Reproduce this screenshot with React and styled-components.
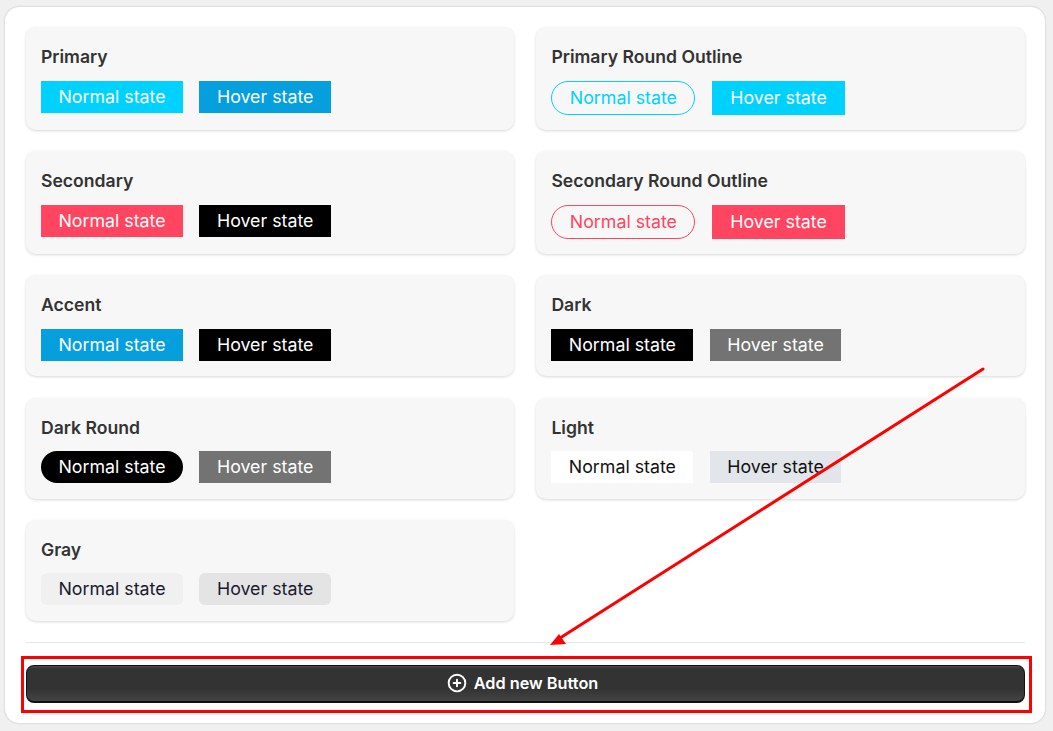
import React from 'react';
import styled, { createGlobalStyle } from 'styled-components';
import { CirclePlus } from 'lucide-react';

const GlobalStyle = createGlobalStyle`
  html, body {
    margin: 0;
    background: #f0f0f0;
    font-family: Inter, "Liberation Sans", sans-serif;
  }
`;

const Page = styled.div`
  position: relative;
  height: 731px;
  box-sizing: border-box;
  padding: 7px 8px 8px 5px;
  overflow: hidden;
`;

const Panel = styled.div`
  height: 100%;
  box-sizing: border-box;
  padding: 20.25px 20px 20px 21px;
  background: #fff;
  border-radius: 14px;
  box-shadow: 0 0 2px rgba(0, 0, 0, 0.25);
`;

const Grid = styled.div`
  display: grid;
  grid-template-columns: 488px 1fr;
  column-gap: 22.4px;
  row-gap: 21.1px;
`;

const Card = styled.div`
  padding: 18px 15px 15.3px;
  background: #f7f7f7;
  border-radius: 10px;
  box-shadow: 0 1px 3px rgba(0, 0, 0, 0.16);
`;

const CardTitle = styled.h3`
  margin: 0 0 12px;
  font-size: 17.6px;
  line-height: 23.7px;
  font-weight: 600;
  color: #333;
`;

const Row = styled.div`
  display: flex;
  align-items: flex-start;
  gap: 16.4px;
`;

const Sample = styled.span`
  display: block;
  box-sizing: border-box;
  width: ${(p) => (p.$tall ? '133.6px' : p.$wide ? '142px' : '131.6px')};
  height: ${(p) => (p.$tall ? '34px' : '32px')};
  line-height: ${(p) => (p.$tall ? '34px' : '32px')};
  text-align: center;
  font-size: 17.8px;
  white-space: nowrap;
  color: ${(p) => p.$color || '#fff'};
  background: ${(p) => p.$bg || 'transparent'};
  border-radius: ${(p) => p.$radius || 0};
`;

const OutlineSample = styled(Sample)`
  width: 144px;
  line-height: 32px;
  border: 1px solid ${(p) => p.$color};
  border-radius: 17px;
`;

const Divider = styled.hr`
  margin: 21px 0 22px;
  border: 0;
  border-top: 1px solid #e8e8e8;
`;

const AddButton = styled.button`
  display: flex;
  align-items: center;
  justify-content: center;
  gap: 7px;
  width: 100%;
  height: 38px;
  padding: 0 6px 0 0;
  border: 1px solid #111;
  border-bottom-width: 2px;
  border-radius: 8px;
  background: linear-gradient(#4a4a4a 0, #333 3px, #333 65%, #444 100%);
  color: #fff;
  font-family: inherit;
  font-size: 16.3px;
  font-weight: 600;
`;

const Annotation = styled.svg`
  position: absolute;
  inset: 0;
  pointer-events: none;
`;

const cards = [
  { title: 'Primary', normal: { $bg: '#00d1ff' }, hover: { $bg: '#069fdd' } },
  { title: 'Primary Round Outline', outline: '#00d1ff', hover: { $bg: '#00d1ff', $tall: true } },
  { title: 'Secondary', normal: { $bg: '#ff4560' }, hover: { $bg: '#000' } },
  { title: 'Secondary Round Outline', outline: '#ff4560', hover: { $bg: '#ff4560', $tall: true } },
  { title: 'Accent', normal: { $bg: '#069fdd' }, hover: { $bg: '#000' } },
  { title: 'Dark', normal: { $bg: '#000' }, hover: { $bg: '#737373' } },
  { title: 'Dark Round', normal: { $bg: '#000', $radius: '16px' }, hover: { $bg: '#737373' } },
  { title: 'Light', normal: { $bg: '#fff', $color: '#111' }, hover: { $bg: '#e2e5ea', $color: '#111' } },
  {
    title: 'Gray',
    normal: { $bg: '#f0f0f0', $color: '#1a1a2e', $radius: '6px' },
    hover: { $bg: '#e4e4e4', $color: '#1a1a2e', $radius: '6px' },
  },
];

const App = () => (
  <Page>
    <GlobalStyle />
    <Panel>
      <Grid>
        {cards.map((card) => (
          <Card key={card.title}>
            <CardTitle>{card.title}</CardTitle>
            <Row>
              {card.outline ? (
                <OutlineSample $tall $color={card.outline}>Normal state</OutlineSample>
              ) : (
                <Sample $wide {...card.normal}>Normal state</Sample>
              )}
              <Sample {...card.hover}>Hover state</Sample>
            </Row>
          </Card>
        ))}
      </Grid>
      <Divider />
      <AddButton>
        <CirclePlus size={20} strokeWidth={2.3} />
        Add new Button
      </AddButton>
    </Panel>
    <Annotation width="1053" height="731" viewBox="0 0 1053 731">
      <rect x="22.5" y="657.5" width="1008" height="54" fill="none" stroke="#ff0000" strokeWidth="3" />
      <line x1="983" y1="369" x2="560" y2="638" stroke="#ff0000" strokeWidth="3" strokeLinecap="round" />
      <polygon points="550,645 559,634 566,644" fill="#ff0000" />
    </Annotation>
  </Page>
);

export default App;
